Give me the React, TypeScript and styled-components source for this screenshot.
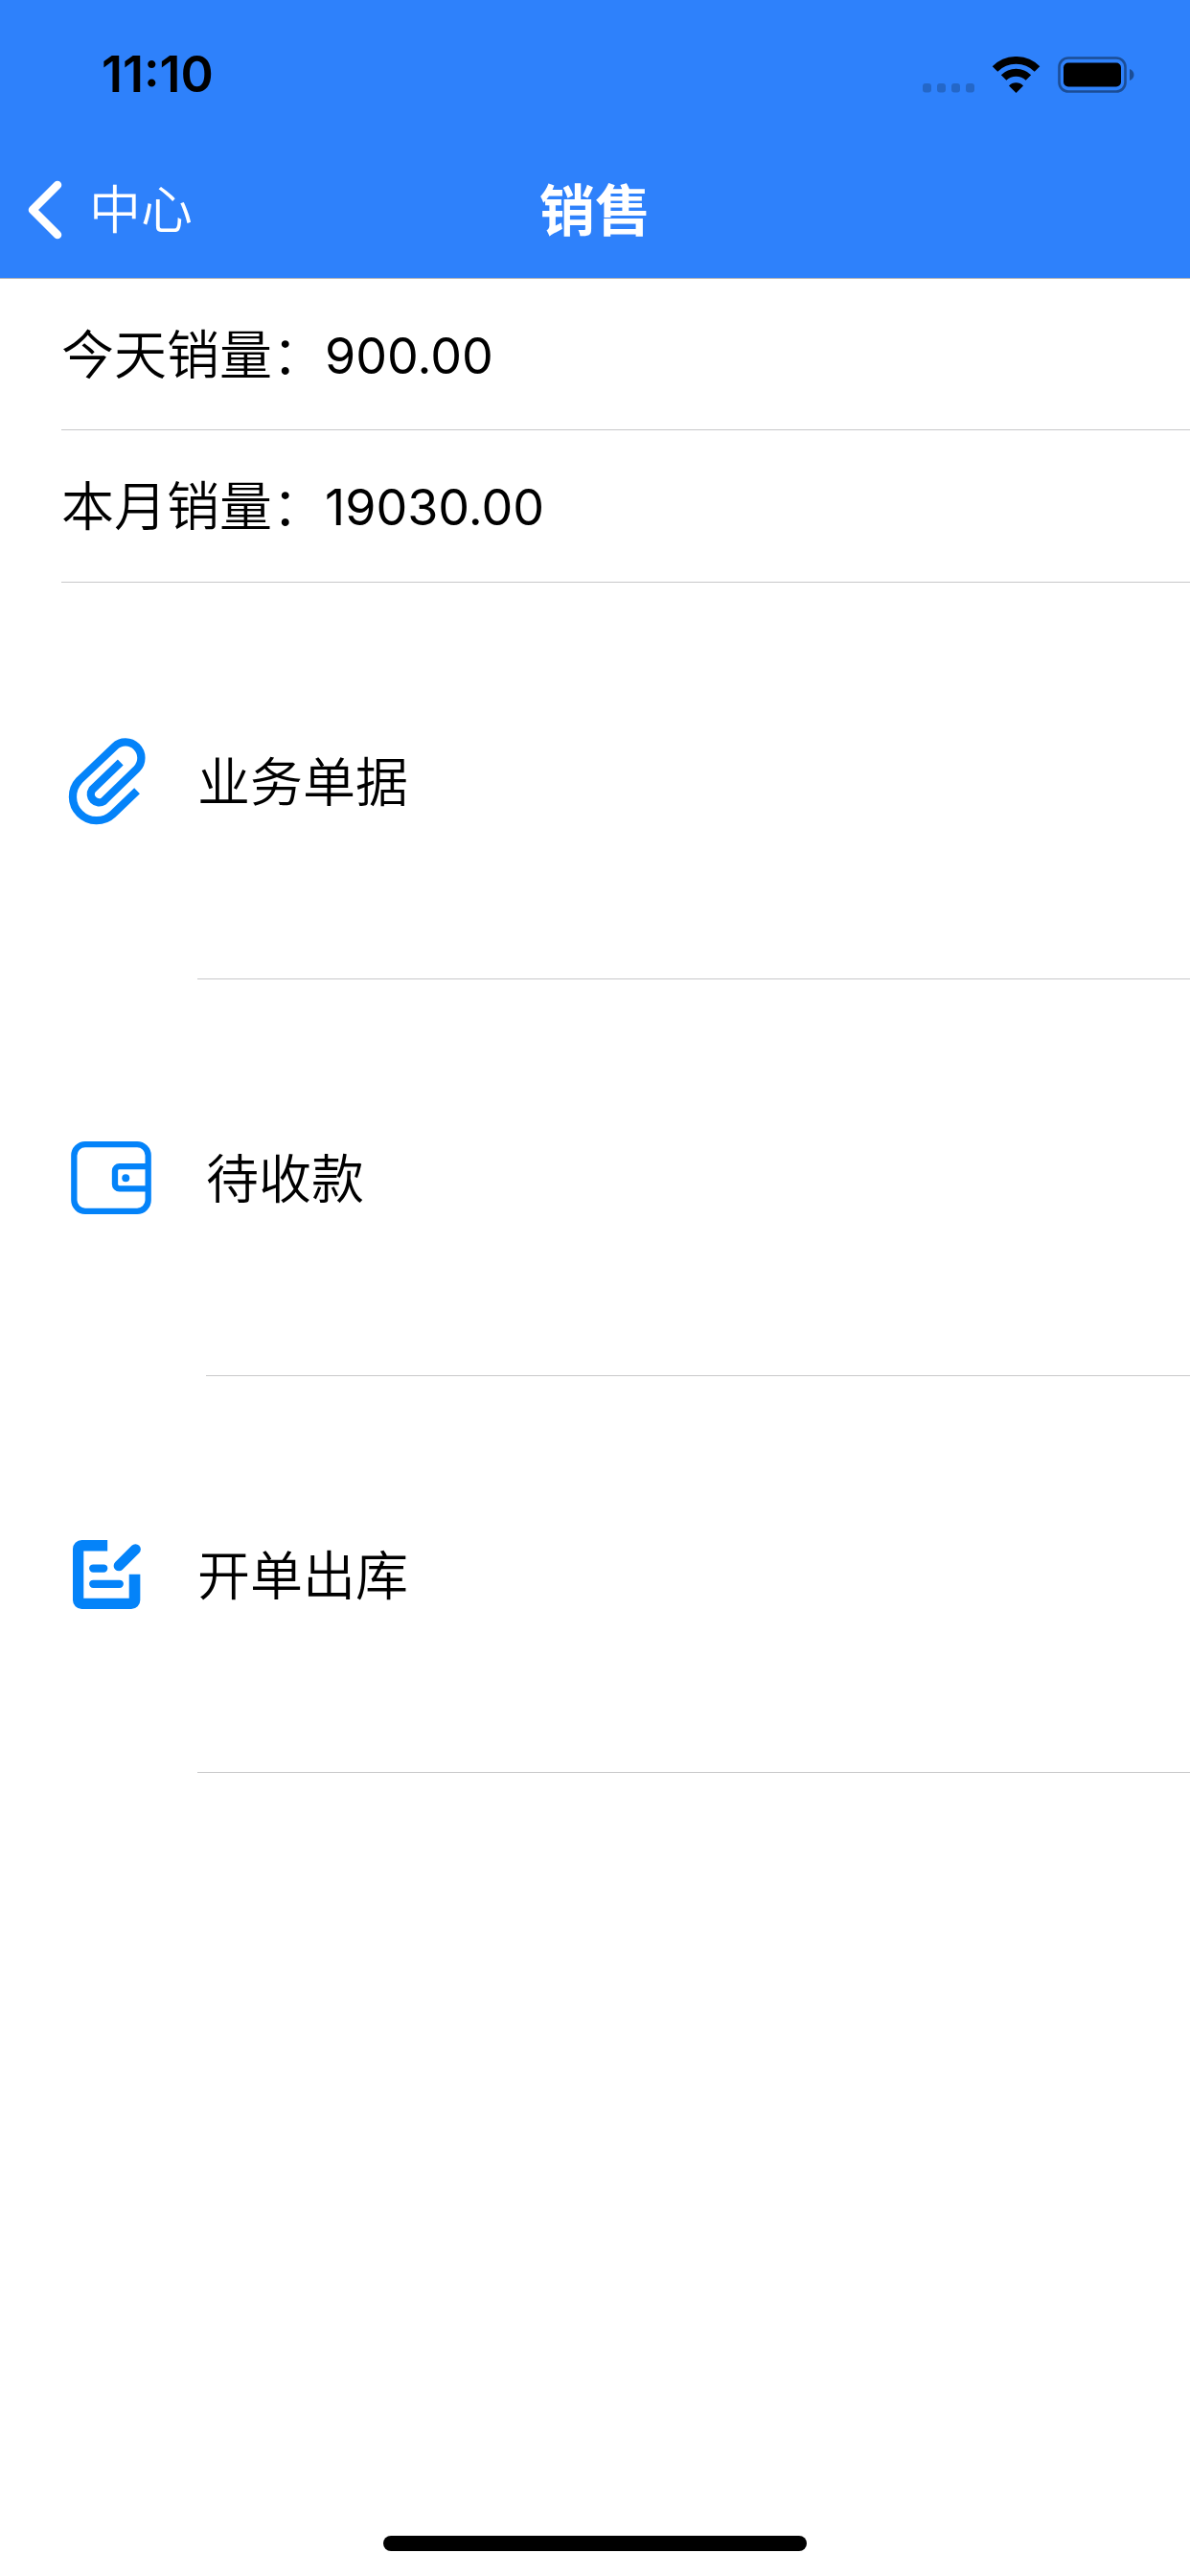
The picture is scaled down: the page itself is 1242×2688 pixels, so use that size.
import React from "react";
import styled, { createGlobalStyle } from "styled-components";

const GlobalStyle = createGlobalStyle`
  *, *::before, *::after { box-sizing: border-box; }
  body {
    margin: 0;
    background: #fff;
    color: #000;
    font-family: Inter, "Noto Sans CJK SC", sans-serif;
  }
`;

const Screen = styled.div`
  display: flex;
  flex-direction: column;
  min-height: 100vh;
`;

const Header = styled.header`
  background: #2e81fb;
  color: #fff;
`;

const StatusBar = styled.div`
  display: flex;
  align-items: center;
  justify-content: space-between;
  height: 132px;
  padding: 24px 58px 0 106px;
  color: #000;
`;

const Time = styled.time`
  font-size: 52px;
  font-weight: 600;
  line-height: 60px;
`;

const StatusIcons = styled.div`
  display: flex;
  align-items: flex-end;
  gap: 18px;
`;

const NavBar = styled.nav`
  display: grid;
  grid-template-columns: 1fr auto 1fr;
  align-items: center;
  height: 158px;
  padding: 16px 28px 0;
`;

const BackButton = styled.button`
  display: flex;
  align-items: center;
  justify-self: start;
  gap: 28px;
  padding: 0;
  border: 0;
  background: none;
  color: inherit;
  font-family: "Noto Sans CJK SC", sans-serif;
  font-size: 54px;
  font-weight: 350;
  line-height: 80px;
  cursor: pointer;
`;

const BackLabel = styled.span`
  padding-bottom: 6px;
`;

const Title = styled.h1`
  margin: 0;
  padding-bottom: 6px;
  font-family: "Noto Sans CJK SC", sans-serif;
  font-size: 58px;
  font-weight: 700;
  line-height: 80px;
`;

const Stats = styled.dl`
  margin: 0;
  padding-left: 64px;
  border-top: 1px solid #b4b4b6;
`;

const Stat = styled.div`
  display: flex;
  align-items: baseline;
  height: 159px;
  padding-top: 35px;
  border-bottom: 1px solid #c8c8ca;

  &:first-child {
    height: 158px;
  }
`;

const StatLabel = styled.dt`
  font-family: "Noto Sans CJK SC", sans-serif;
  font-size: 55px;
  font-weight: 350;
  line-height: 80px;
`;

const StatValue = styled.dd`
  margin: 0;
  font-size: 52px;
  line-height: 80px;
`;

const Menu = styled.ul`
  margin: 0;
  padding: 0 0 0 64px;
  list-style: none;
`;

const MenuLink = styled.a`
  display: flex;
  gap: 48px;
  height: 414px;
  color: inherit;
  text-decoration: none;
`;

const IconBox = styled.span<{ $width: number }>`
  display: flex;
  flex: none;
  align-items: center;
  justify-content: center;
  width: ${({ $width }) => $width}px;
  color: #0483f9;
`;

const MenuLabel = styled.span`
  display: flex;
  flex: 1;
  align-items: center;
  padding-bottom: 6px;
  border-bottom: 1px solid #c8c8ca;
  font-family: "Noto Sans CJK SC", sans-serif;
  font-size: 55px;
  font-weight: 350;
  line-height: 80px;
`;

const Footer = styled.footer`
  display: flex;
  justify-content: center;
  margin-top: auto;
  padding-bottom: 26px;
`;

const HomeIndicator = styled.div`
  width: 442px;
  height: 16px;
  border-radius: 8px;
  background: #000;
`;

const SignalDots = () => (
  <svg width="54" height="10" viewBox="0 0 54 10" fillOpacity="0.2" aria-hidden="true">
    {[0, 15, 30, 45].map((x) => (
      <rect key={x} x={x} width="9" height="9.5" rx="3" />
    ))}
  </svg>
);

const Wifi = () => (
  <svg width="51" height="38" viewBox="0 0 51 38" aria-hidden="true">
    <g fill="none" stroke="#000" strokeWidth="7.8">
      <path d="M3.5 13A31.1 31.1 0 0 1 47.5 13" />
      <path d="M12.6 22.1A18.2 18.2 0 0 1 38.4 22.1" />
    </g>
    <path d="M25.5 38L18 30.5A10.5 10.5 0 0 1 33 30.5Z" />
  </svg>
);

const Battery = () => (
  <svg width="80" height="38" viewBox="0 0 80 38" aria-hidden="true">
    <g opacity="0.4">
      <rect x="1.5" y="1.5" width="69" height="35" rx="9.5" fill="none" stroke="#000" strokeWidth="2.6" />
      <path d="M75 13C81 15 81 23 75 25Z" />
    </g>
    <rect x="6" y="6.5" width="60" height="25" rx="5" />
  </svg>
);

const Chevron = () => (
  <svg width="37" height="62" viewBox="0 0 37 62" fill="none" aria-hidden="true">
    <path
      d="M32 5L6 31L32 57"
      stroke="#fff"
      strokeWidth="8.6"
      strokeLinecap="round"
      strokeLinejoin="round"
    />
  </svg>
);

const Paperclip = () => (
  <svg width="81" height="91" viewBox="90 87 244 273" fill="none" aria-hidden="true">
    <path
      d="M307 253L231 326A75 75 0 0 1 125 220L236 114A49.5 49.5 0 0 1 306 184L202 285A26 26 0 0 1 166 249L255 163"
      stroke="currentColor"
      strokeWidth="25"
    />
  </svg>
);

const Wallet = () => (
  <svg width="84" height="76" viewBox="98 91 252 229" aria-hidden="true">
    <g fill="none" stroke="currentColor" strokeWidth="19">
      <rect x="107.5" y="100.5" width="233" height="210" rx="35" />
      <path d="M340 170H250a14 14 0 0 0-14 14V226a14 14 0 0 0 14 14H340" />
    </g>
    <circle cx="270" cy="206" r="12" fill="currentColor" />
  </svg>
);

const EditNote = () => (
  <svg width="71" height="72" viewBox="108 104 214 217" aria-hidden="true">
    <path
      fill="currentColor"
      d="M217 104H136a28 28 0 0 0-28 28V293a28 28 0 0 0 28 28H292a28 28 0 0 0 28-28V212H285V287H142V139H217Z"
    />
    <g fill="none" stroke="currentColor" strokeLinecap="round">
      <path d="M172 193H205M172 242H255" strokeWidth="25" />
      <path d="M253 185L305 133" strokeWidth="33" />
    </g>
  </svg>
);

const stats = [
  { label: "今天销量：", value: "900.00" },
  { label: "本月销量：", value: "19030.00" },
];

const menu = [
  { label: "业务单据", href: "#documents", Icon: Paperclip, width: 94 },
  { label: "待收款", href: "#receivables", Icon: Wallet, width: 103 },
  { label: "开单出库", href: "#outbound", Icon: EditNote, width: 94 },
];

export default function App() {
  return (
    <Screen lang="zh-CN">
      <GlobalStyle />
      <Header>
        <StatusBar>
          <Time>11:10</Time>
          <StatusIcons>
            <SignalDots />
            <Wifi />
            <Battery />
          </StatusIcons>
        </StatusBar>
        <NavBar>
          <BackButton type="button">
            <Chevron />
            <BackLabel>中心</BackLabel>
          </BackButton>
          <Title>销售</Title>
        </NavBar>
      </Header>
      <main>
        <Stats>
          {stats.map(({ label, value }) => (
            <Stat key={label}>
              <StatLabel>{label}</StatLabel>
              <StatValue>{value}</StatValue>
            </Stat>
          ))}
        </Stats>
        <Menu>
          {menu.map(({ label, href, Icon, width }) => (
            <li key={label}>
              <MenuLink href={href}>
                <IconBox $width={width}>
                  <Icon />
                </IconBox>
                <MenuLabel>{label}</MenuLabel>
              </MenuLink>
            </li>
          ))}
        </Menu>
      </main>
      <Footer>
        <HomeIndicator />
      </Footer>
    </Screen>
  );
}
